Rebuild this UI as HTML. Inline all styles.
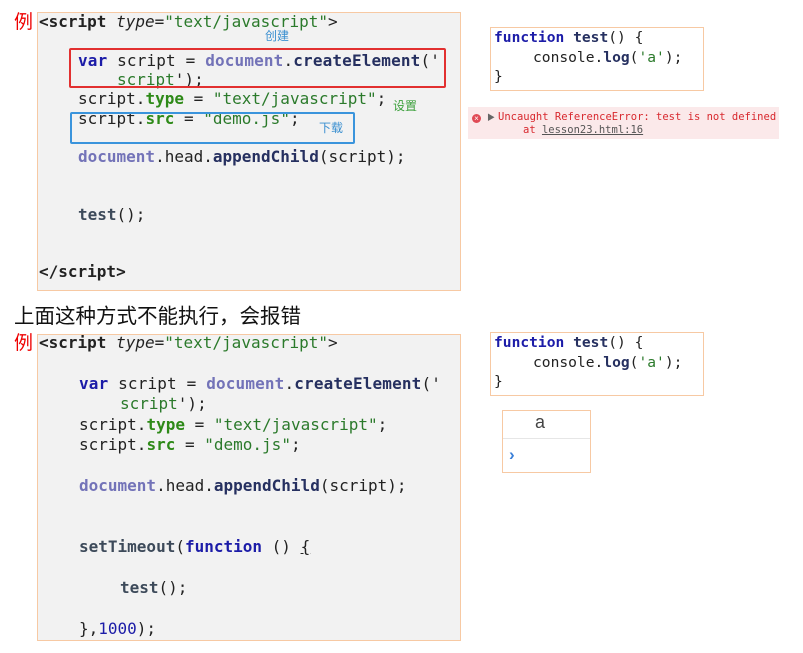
<!DOCTYPE html>
<html><head><meta charset="utf-8"><style>
body{margin:0;width:803px;height:653px;background:#fff;position:relative;overflow:hidden;font-family:"Liberation Sans","Noto Sans CJK SC",sans-serif}
.box{position:absolute;border:1.5px solid #f7c9a3;box-sizing:border-box}
.code{background:#f2f2f2}
.l{position:absolute;white-space:pre;font-family:"DejaVu Sans Mono","Liberation Mono",monospace;font-size:16px;line-height:20px;color:#222}
.k{color:#1c1ca8;font-weight:bold}
.d{color:#7373b8;font-weight:bold}
.f{color:#263060;font-weight:bold}
.s{color:#2b7a2b}
.g{color:#2e8a18;font-weight:bold}
.t{color:#3d4a5a;font-weight:bold}
.n{color:#1c1ca8}
.li{position:absolute;color:#e00;font-size:19px;font-family:"Noto Sans CJK SC",sans-serif;line-height:22px}
.cn{position:absolute;font-family:"Noto Sans CJK SC",sans-serif;font-size:12px;line-height:14px}
</style></head><body>
<div class="li" style="left:14px;top:10px">例</div>
<div class="box code" style="left:37px;top:12px;width:424px;height:279px"></div>
<div class="l" style="left:39px;top:12px"><b>&lt;script</b> <i>type</i>=<span class="s">"text/javascript"</span>&gt;</div>
<div class="cn" style="left:265px;top:29px;color:#3a8fd0">创建</div>
<div class="l" style="left:78px;top:51px;letter-spacing:0.15px"><span class="k">var</span> script = <span class="d">document</span>.<span class="f">createElement</span>('</div>
<div class="l" style="left:117px;top:70px"><span class="s">script</span>');</div>
<div class="l" style="left:78px;top:89px">script.<span class="g">type</span> = <span class="s">"text/javascript"</span>;</div>
<div class="cn" style="left:393px;top:99px;color:#3ca03c">设置</div>
<div class="l" style="left:78px;top:109px">script.<span class="g">src</span> = <span class="s">"demo.js"</span>;</div>
<div class="cn" style="left:319px;top:121px;color:#3a8fd0">下载</div>
<div class="l" style="left:78px;top:147px"><span class="d">document</span>.head.<span class="f">appendChild</span>(script);</div>
<div class="l" style="left:78px;top:205px"><span class="t">test</span>();</div>
<div class="l" style="left:39px;top:262px"><b>&lt;/script&gt;</b></div>
<div style="position:absolute;left:69px;top:48px;width:377px;height:40px;border:2px solid #e23030;border-radius:2px;box-sizing:border-box"></div>
<div style="position:absolute;left:70px;top:112px;width:285px;height:32px;border:2px solid #3a94dc;border-radius:2px;box-sizing:border-box"></div>

<div style="position:absolute;left:14px;top:301px;font-size:20.5px;line-height:26px;color:#111;font-family:'Noto Sans CJK SC',sans-serif">上面这种方式不能执行，会报错</div>
<div class="li" style="left:14px;top:331px">例</div>
<div class="box code" style="left:37px;top:334px;width:424px;height:307px"></div>
<div class="l" style="left:39px;top:333px"><b>&lt;script</b> <i>type</i>=<span class="s">"text/javascript"</span>&gt;</div>
<div class="l" style="left:79px;top:374px;letter-spacing:0.15px"><span class="k">var</span> script = <span class="d">document</span>.<span class="f">createElement</span>('</div>
<div class="l" style="left:120px;top:394px"><span class="s">script</span>');</div>
<div class="l" style="left:79px;top:415px">script.<span class="g">type</span> = <span class="s">"text/javascript"</span>;</div>
<div class="l" style="left:79px;top:435px">script.<span class="g">src</span> = <span class="s">"demo.js"</span>;</div>
<div class="l" style="left:79px;top:476px"><span class="d">document</span>.head.<span class="f">appendChild</span>(script);</div>
<div class="l" style="left:79px;top:537px"><span class="t">setTimeout</span>(<span class="k">function</span> () <u>{</u></div>
<div class="l" style="left:120px;top:578px"><span class="t">test</span>();</div>
<div class="l" style="left:79px;top:619px">},<span class="n">1000</span>);</div>

<div class="box" style="left:490px;top:27px;width:214px;height:64px;background:#fff"></div>
<div class="l" style="left:494px;top:28px;font-size:14.6px"><span class="k">function</span> <span class="f">test</span>() {</div>
<div class="l" style="left:533px;top:48px;font-size:14.6px">console.<span class="f">log</span>(<span class="s">'a'</span>);</div>
<div class="l" style="left:494px;top:67px;font-size:14.6px">}</div>
<div style="position:absolute;left:468px;top:107px;width:311px;height:32px;background:#fbe9ea"></div>
<div style="position:absolute;left:472px;top:114px;width:9px;height:9px;border-radius:50%;background:#e04a55;color:#fff;font-size:8px;line-height:9px;text-align:center">×</div>
<div style="position:absolute;left:487px;top:112px;font-size:8px;color:#666">▶</div>
<div class="l" style="left:498px;top:111px;font-size:10.5px;line-height:13px;color:#d8282e">Uncaught ReferenceError: test is not defined</div>
<div class="l" style="left:523px;top:124px;font-size:10.5px;line-height:13px;color:#d8282e">at <span style="color:#555;text-decoration:underline">lesson23.html:16</span></div>

<div class="box" style="left:490px;top:332px;width:214px;height:64px;background:#fff"></div>
<div class="l" style="left:494px;top:333px;font-size:14.6px"><span class="k">function</span> <span class="f">test</span>() {</div>
<div class="l" style="left:533px;top:353px;font-size:14.6px">console.<span class="f">log</span>(<span class="s">'a'</span>);</div>
<div class="l" style="left:494px;top:372px;font-size:14.6px">}</div>
<div class="box" style="left:502px;top:410px;width:89px;height:63px;background:#fff"></div>
<div style="position:absolute;left:503px;top:438px;width:87px;height:1px;background:#e6e6e6"></div>
<div style="position:absolute;left:535px;top:412px;font-size:18px;color:#444">a</div>
<div style="position:absolute;left:509px;top:445px;font-size:17px;color:#3a7fd8;font-weight:bold">›</div>
</body></html>
